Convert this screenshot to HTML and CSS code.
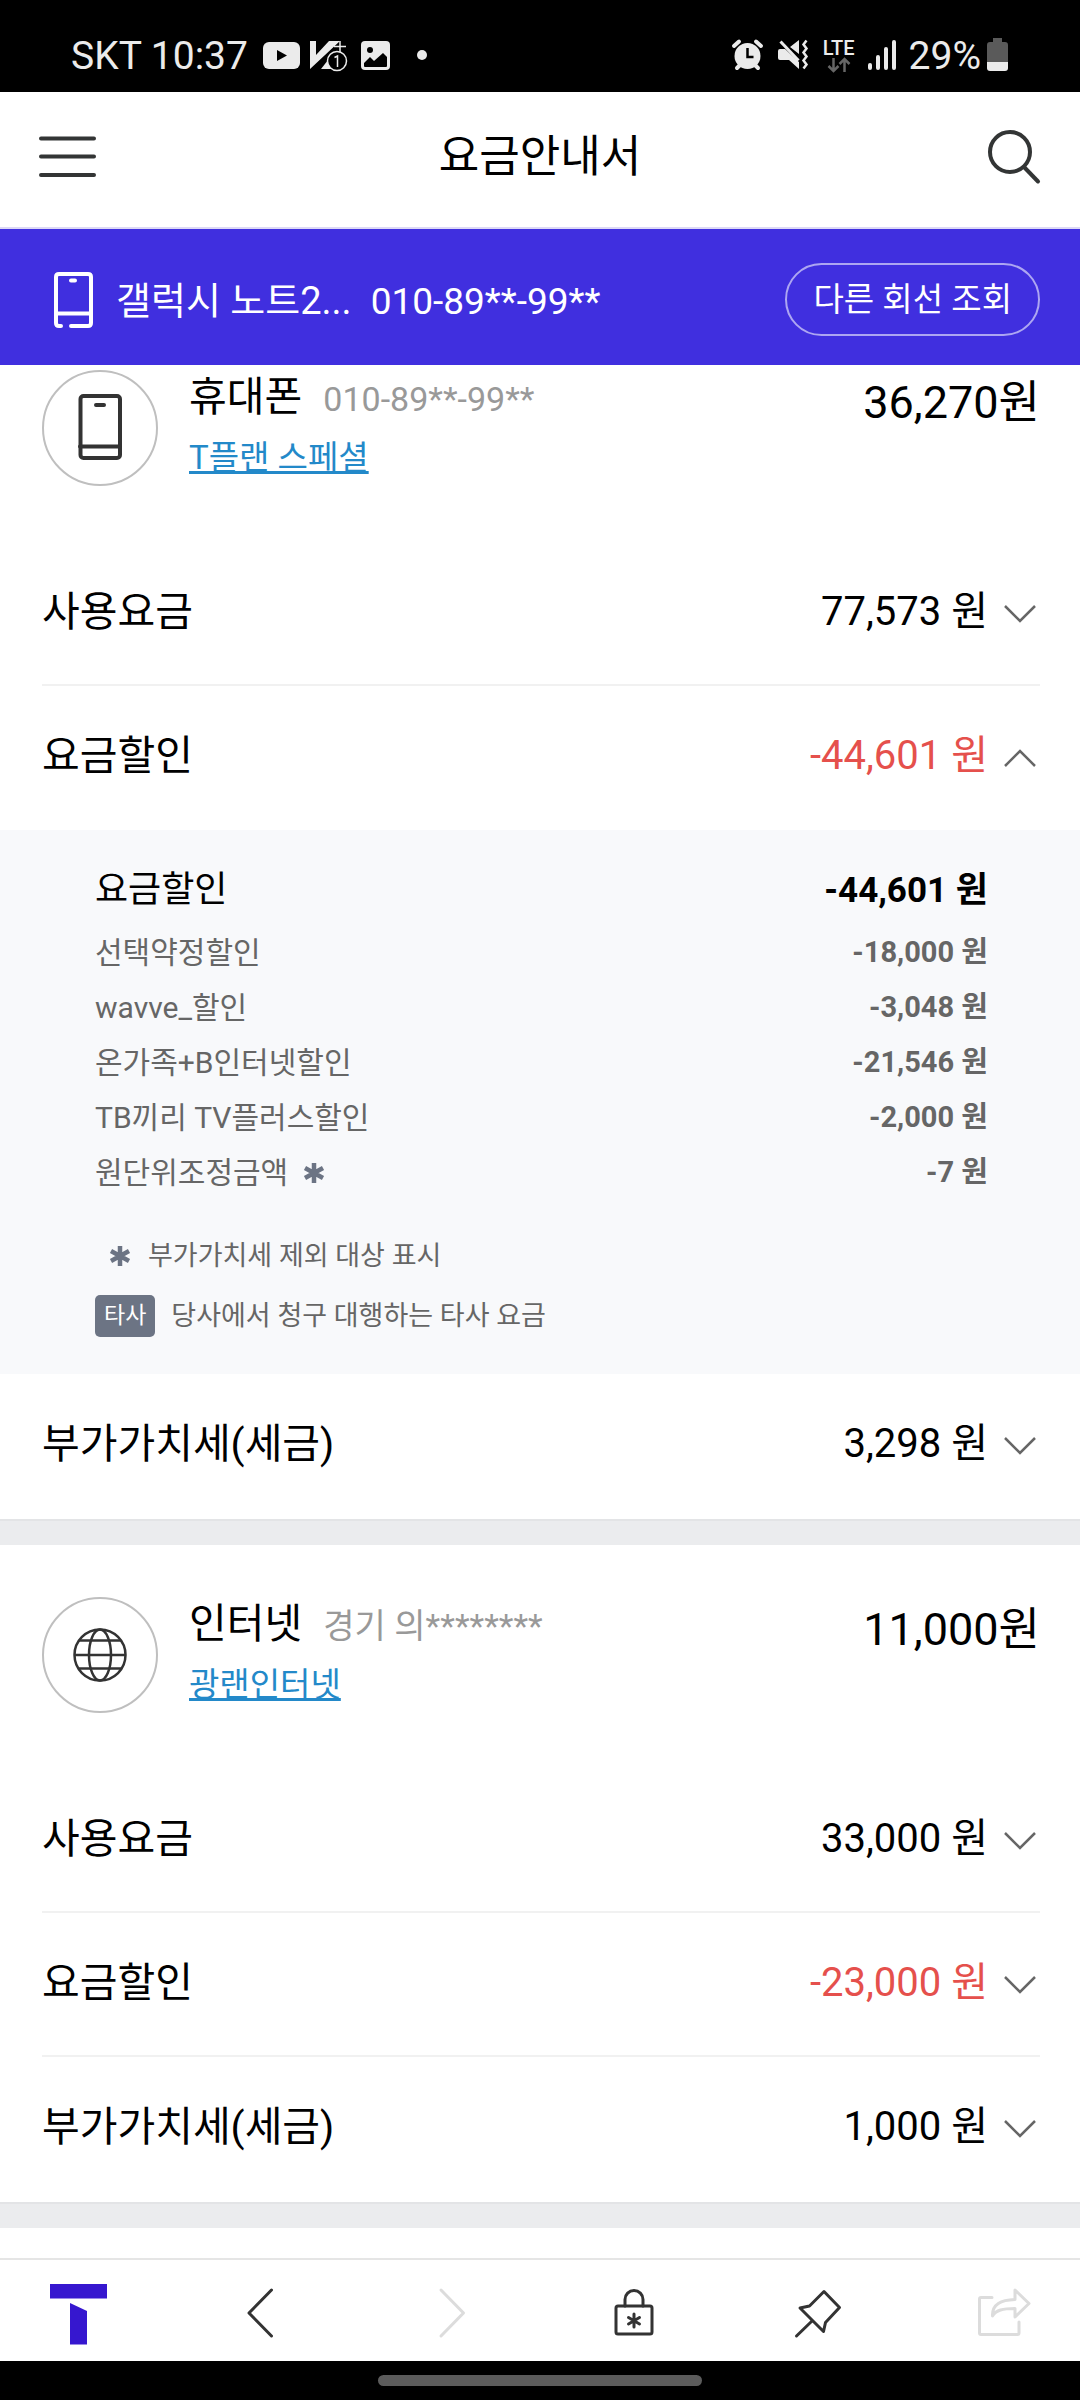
FILE: index.html
```html
<!DOCTYPE html>
<html lang="ko">
<head>
<meta charset="utf-8">
<meta name="viewport" content="width=device-width, initial-scale=1">
<title>요금안내서</title>
<link rel="stylesheet" href="styles.css">
</head>
<body>
<svg class="defs" aria-hidden="true">
  <symbol id="chevron" viewBox="0 0 36 24"><path d="M1 4 16 19 31 4" fill="none" stroke="#666" stroke-width="2.500"/></symbol>
  <symbol id="asterisk" viewBox="0 0 22 22"><path d="M11 1v20M2 6l18 10M20 6 2 16" fill="none" stroke="#6c7484" stroke-width="4.500"/></symbol>
</svg>

<div class="status">
  <div class="status-group">
    <span class="status-text">SKT 10:37</span>
    <svg class="status-icons" width="172" height="40" viewBox="259 36 172 40" aria-hidden="true">
      <rect x="264" y="42" width="37" height="27" rx="6" fill="#ebebeb"/><path d="m278 50 10 5.500-10 5.500z" fill="#000"/>
      <path d="M311 41h6v14l13-14h11l-30 28z" fill="#ebebeb"/><path d="M333 55l-11 14h16z" fill="#ebebeb"/><path d="M341 41v12M335 46.500h12" stroke="#ebebeb" stroke-width="1.500"/>
      <circle cx="338" cy="61" r="9.500" fill="#000" stroke="#ebebeb" stroke-width="1.500"/><path d="M335.500 57.500l3-1.500v11" fill="none" stroke="#ebebeb" stroke-width="1.500"/>
      <rect x="362" y="41" width="29" height="29" rx="4" fill="#ebebeb"/><circle cx="371" cy="50" r="3" fill="#000"/><path d="m365 63 6-6 4 4 9-8 4 4v9q0 1-1 1h-21q-1 0-1-1z" fill="#000"/>
      <circle cx="423" cy="55" r="5" fill="#ebebeb"/>
    </svg>
  </div>
  <div class="status-group">
    <svg class="status-icons" width="80" height="40" viewBox="730 36 80 40" aria-hidden="true">
      <circle cx="746.500" cy="56" r="13" fill="#ebebeb"/><path d="M733 46l5-4.500M760 46l-5-4.500M736 68l3-3M757 68l-3-3" stroke="#ebebeb" stroke-width="4" stroke-linecap="round"/><path d="M746.500 48v9h6" fill="none" stroke="#000" stroke-width="2.500"/>
      <path d="M777 51q0-2 2-2h5l14 13v7l-10-9h-9q-2 0-2-2zM789 47l9-7v14z" fill="#ebebeb"/><path d="m779.500 41.500 18 19" stroke="#ebebeb" stroke-width="3"/><path d="m805.500 40.500-3 4 3 4-3 4 3 4-3 4 3 4-3 4" fill="none" stroke="#ebebeb" stroke-width="2.500"/>
    </svg>
    <span class="lte"><span>LTE</span>
      <svg width="24" height="16" viewBox="826 56 24 16" aria-hidden="true"><path d="M832.500 57v13M827.500 65l5 5 5-5M843.500 71v-13M838.500 63l5-5 5 5" fill="none" stroke="#666" stroke-width="2.500"/></svg>
    </span>
    <svg class="status-icons" width="30" height="40" viewBox="865 36 30 40" aria-hidden="true"><path d="M868 65v3M876 57v11M884 49v19M892 42v26" stroke="#ebebeb" stroke-width="4" stroke-linecap="round"/></svg>
    <span class="status-text battery-text">29%</span>
    <svg class="status-icons" width="22" height="40" viewBox="987 36 22 40" aria-hidden="true"><path d="M993 38h9v4h3q3 0 3 3v17h-21V45q0-3 3-3h3z" fill="#5a5a5a"/><path d="M987 62h21v6q0 3-3 3h-15q-3 0-3-3z" fill="#ebebeb"/></svg>
  </div>
</div>

<header class="topbar">
  <button class="icon-btn" aria-label="메뉴"><svg width="60" height="64" viewBox="0 0 60 64"><path d="M3 14.500h53M3 32.500h53M3 51h53" stroke="#333535" stroke-width="4" stroke-linecap="round"/></svg></button>
  <h1>요금안내서</h1>
  <button class="icon-btn" aria-label="검색"><svg width="60" height="64" viewBox="0 0 60 64"><circle cx="28" cy="28" r="20" fill="none" stroke="#333535" stroke-width="4"/><path d="m42.500 43.500 13.500 14" stroke="#333535" stroke-width="4" stroke-linecap="round"/></svg></button>
</header>

<div class="line-bar">
  <svg width="42" height="60" viewBox="0 0 42 60" aria-hidden="true"><path d="M9 56H7q-3 0-3-3V7q0-3 3-3h29q3 0 3 3v46q0 3-3 3H19M4 43.500h35M19 10.500h4" fill="none" stroke="#fff" stroke-width="4" stroke-linecap="round"/></svg>
  <div class="line-info">
    <span class="device">갤럭시 노트2...</span>
    <span class="number">010-89**-99**</span>
  </div>
  <button class="switch-line">다른 회선 조회</button>
</div>

<main>
  <section class="bill bill-scrolled">
    <div class="bill-head">
      <svg class="badge-icon" width="116" height="116" viewBox="0 0 116 116" aria-hidden="true"><circle cx="58" cy="58" r="57" fill="none" stroke="#bfbfbf" stroke-width="2"/><rect x="38.500" y="26" width="39.500" height="62" rx="3" fill="none" stroke="#333" stroke-width="4"/><path d="M38 76.500h40M54 35h8" stroke="#333" stroke-width="4" stroke-linecap="round"/></svg>
      <div class="bill-info">
        <h2>휴대폰 <span class="sub">010-89**-99**</span></h2>
        <a href="#">T플랜 스페셜</a>
      </div>
      <strong class="total">36,270원</strong>
    </div>
    <button class="row"><span>사용요금</span><span class="amount">77,573 원</span><svg class="chev" width="36" height="24"><use href="#chevron"/></svg></button>
    <button class="row" aria-expanded="true"><span>요금할인</span><span class="amount minus">-44,601 원</span><svg class="chev up" width="36" height="24"><use href="#chevron"/></svg></button>
    <div class="panel">
      <table>
        <thead><tr><th scope="row">요금할인</th><td>-44,601 원</td></tr></thead>
        <tbody>
          <tr><th scope="row">선택약정할인</th><td>-18,000 원</td></tr>
          <tr><th scope="row">wavve_할인</th><td>-3,048 원</td></tr>
          <tr><th scope="row">온가족+B인터넷할인</th><td>-21,546 원</td></tr>
          <tr><th scope="row">TB끼리 TV플러스할인</th><td>-2,000 원</td></tr>
          <tr><th scope="row">원단위조정금액<svg class="mark" width="22" height="22"><use href="#asterisk"/></svg></th><td>-7 원</td></tr>
        </tbody>
      </table>
      <ul class="legend">
        <li><svg class="legend-mark" width="22" height="22"><use href="#asterisk"/></svg>부가가치세 제외 대상 표시</li>
        <li><span class="tag">타사</span>당사에서 청구 대행하는 타사 요금</li>
      </ul>
    </div>
    <button class="row"><span>부가가치세(세금)</span><span class="amount">3,298 원</span><svg class="chev" width="36" height="24"><use href="#chevron"/></svg></button>
  </section>

  <section class="bill">
    <div class="bill-head">
      <svg class="badge-icon" width="116" height="116" viewBox="0 0 116 116" aria-hidden="true"><circle cx="58" cy="58" r="57" fill="none" stroke="#bfbfbf" stroke-width="2"/><g fill="none" stroke="#333" stroke-width="2.500"><circle cx="58" cy="58" r="25.500"/><ellipse cx="58" cy="58" rx="11" ry="25.500"/><path d="M32 58h52M37 43.500h42M37 71.500h42"/></g></svg>
      <div class="bill-info">
        <h2>인터넷 <span class="sub">경기 의********</span></h2>
        <a href="#">광랜인터넷</a>
      </div>
      <strong class="total">11,000원</strong>
    </div>
    <button class="row"><span>사용요금</span><span class="amount">33,000 원</span><svg class="chev" width="36" height="24"><use href="#chevron"/></svg></button>
    <button class="row"><span>요금할인</span><span class="amount minus">-23,000 원</span><svg class="chev" width="36" height="24"><use href="#chevron"/></svg></button>
    <button class="row"><span>부가가치세(세금)</span><span class="amount">1,000 원</span><svg class="chev" width="36" height="24"><use href="#chevron"/></svg></button>
  </section>
</main>

<nav class="tabs">
  <button aria-label="홈"><svg width="60" height="66" viewBox="0 0 60 66"><path d="M2 4h57v14.500H2zM22 23l17 8v33.500H22z" fill="#3617cf"/></svg></button>
  <button aria-label="뒤로"><svg width="60" height="66" viewBox="0 0 60 66"><path d="M38.500 10 16 33l22.500 23"/></svg></button>
  <button aria-label="앞으로" disabled><svg width="60" height="66" viewBox="0 0 60 66"><path d="M23 10l22.500 23L23 56"/></svg></button>
  <button aria-label="잠금"><svg width="60" height="66" viewBox="0 0 60 66"><rect x="12" y="26" width="36" height="28" rx="2"/><path d="M21 26v-6.500a9 9 0 0 1 18 0V26"/><path d="M30 34v13M24.500 37.500l11 6.500M35.500 37.500l-11 6.500"/></svg></button>
  <button aria-label="고정"><svg width="60" height="66" viewBox="0 0 60 66"><path d="M35 11.500 50.500 27.500 36.500 42.500 34.500 51.500 11 28l9.500-2zM23 41 7.500 56"/></svg></button>
  <button aria-label="공유" disabled><svg width="60" height="66" viewBox="0 0 60 66"><path d="M18 17.500H7q-1.500 0-1.500 1.500v34q0 1.500 1.500 1.500h36.500q1.500 0 1.500-1.500V42M41 10v9.500C27 20 18 24 18.500 36 22 30 29 28.500 41 28.500V37L55 23.500z"/></svg></button>
</nav>
<div class="home-area"><div class="home-pill"></div></div>
</body>
</html>
```
FILE: styles.css
```css
* { box-sizing: border-box; }

body {
  margin: 0;
  min-height: 100vh;
  display: flex;
  flex-direction: column;
  background: #fff;
  color: #000;
  font-family: Roboto, "Noto Sans CJK KR", sans-serif;
}

button {
  margin: 0;
  padding: 0;
  border: 0;
  background: none;
  color: inherit;
  font: inherit;
}

svg { display: block; flex: none; }
.defs { position: absolute; width: 0; height: 0; }

/* system status bar */
.status {
  display: flex;
  justify-content: space-between;
  align-items: center;
  padding: 26px 71px 6px;
  background: #000;
  color: #ebebeb;
}
.status-group { display: flex; align-items: center; }
.status-text { font-size: 39px; line-height: 60px; }
.status-group:first-child { gap: 10px; }
.status-group:last-child { gap: 12px; }
.lte {
  display: flex;
  flex-direction: column;
  align-items: center;
  font-size: 20px;
  line-height: 18px;
  font-weight: 500;
}
.battery-text { margin-right: -6px; }

/* page header */
.topbar {
  display: flex;
  justify-content: space-between;
  align-items: center;
  padding: 32px 38px 39px;
  border-bottom: 2px solid #dcd8f6;
}
.topbar h1 {
  margin: 0;
  padding-top: 2px;
  font-size: 44px;
  line-height: 62px;
  font-weight: 400;
}
.icon-btn { width: 60px; height: 64px; }

.line-bar {
  display: flex;
  align-items: center;
  padding: 34px 40px 29px 52px;
  background: #402fdf;
  color: #fff;
  font-size: 38px;
}
.line-info {
  display: flex;
  align-items: baseline;
  gap: 19px;
  margin-left: 22px;
  padding-bottom: 4px;
}
.number { font-size: 37px; }
.switch-line {
  margin-left: auto;
  padding: 0 26px;
  border: 2px solid #ada6f2;
  border-radius: 37px;
  font-size: 33px;
  line-height: 69px;
}

/* billing sections */
main { flex: 1; }
.bill {
  padding: 52px 0 0;
  border-bottom: 24px solid #ebecee;
}
.bill-scrolled { padding-top: 5px; }
.bill-head {
  display: flex;
  align-items: flex-start;
  margin: 0 40px 50px 42px;
}
.bill-info {
  display: flex;
  flex: 1;
  flex-direction: column;
  align-items: flex-start;
  margin-left: 31px;
}
.bill-info h2 {
  margin: 0;
  font-size: 41px;
  line-height: 54px;
  font-weight: 400;
}
.sub {
  margin-left: 11px;
  color: #999;
  font-size: 34px;
  line-height: 40px;
}
.bill-info a {
  color: #2389c9;
  font-size: 33px;
  line-height: 68px;
  text-decoration-thickness: 3px;
}
.total {
  font-size: 45px;
  line-height: 66px;
  font-weight: 400;
}

.row {
  display: flex;
  align-items: center;
  width: calc(100% - 82px);
  margin: 0 40px 0 42px;
  padding: 40px 0 42px;
  border-bottom: 2px solid #f1f1f1;
  font-size: 41px;
  line-height: 60px;
  text-align: left;
}
.row[aria-expanded="true"] { border-bottom-color: transparent; }
.row:last-child {
  width: 100%;
  margin: 0;
  padding: 40px 40px 45px 42px;
  border-bottom-color: #e3e4e6;
}
.amount { margin-left: auto; font-size: 40px; }
.minus { color: #e5504c; }
.chev { margin: 4px 0 0 16px; }
.up { transform: rotate(180deg); transform-origin: 16px 12px; }

/* expanded discount details */
.panel {
  padding: 26px 92px 28px 95px;
  background: #f8f9fb;
  color: #666;
}
.panel table {
  width: 100%;
  border-collapse: collapse;
  font-size: 30px;
  line-height: 55px;
}
.panel th, .panel td { padding: 0; }
.panel th { text-align: left; font-weight: 400; }
.panel td { text-align: right; font-size: 29px; font-weight: 700; }
.panel thead { color: #000; line-height: 69px; }
.panel thead th { font-size: 36px; }
.panel thead td { font-size: 35px; }
.mark {
  display: inline-block;
  margin-left: 15px;
  vertical-align: -1px;
}
.legend {
  margin: 26px 0 0;
  padding: 0;
  list-style: none;
  font-size: 27px;
  line-height: 60px;
}
.legend li { display: flex; align-items: center; }
.legend-mark { margin: 0 17px 0 14px; }
.tag {
  margin-right: 16px;
  padding: 0 9px;
  border-radius: 5px;
  background: #6c7484;
  color: #fff;
  font-size: 23px;
  line-height: 42px;
}

/* bottom toolbar */
.tabs {
  display: flex;
  justify-content: space-between;
  padding: 20px 46px 15px 48px;
  border-top: 2px solid #e5e5e5;
}
.tabs svg {
  fill: none;
  stroke: #333;
  stroke-width: 3;
  stroke-linecap: round;
  stroke-linejoin: round;
}
.tabs button:first-child svg { stroke: none; }
.tabs button:disabled svg { stroke: #dcdcdc; }

.home-area {
  padding: 14px 0;
  background: #000;
}
.home-pill {
  width: 30%;
  height: 11px;
  margin: 0 auto;
  border-radius: 6px;
  background: #5c5c5c;
}
```
